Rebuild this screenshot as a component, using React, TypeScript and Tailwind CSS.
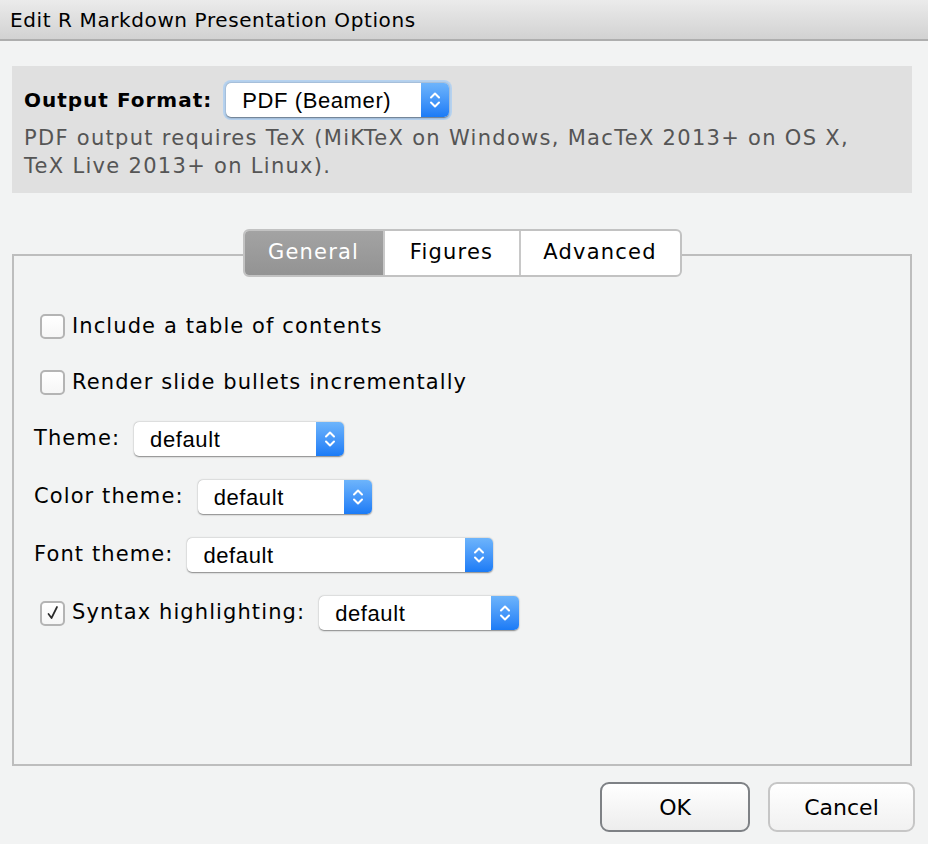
import React from 'react';

const ui = { fontFamily: '"DejaVu Sans", "Noto Sans", sans-serif' };
const helv = { fontFamily: '"Liberation Sans", Arial, sans-serif' };

const Stepper: React.FC = () => (
  <div className="flex h-full w-[28px] items-center justify-center rounded-r-[5px] bg-gradient-to-b from-[#6db4fb] to-[#1a7bf6]">
    <svg width="12" height="20" viewBox="0 0 12 20" fill="none" stroke="white" strokeWidth="2" strokeLinecap="round" strokeLinejoin="round">
      <path d="M2 7.5 L6 3.5 L10 7.5" />
      <path d="M2 12.5 L6 16.5 L10 12.5" />
    </svg>
  </div>
);

const Select: React.FC<{ value: string; width: string; focus?: boolean }> = ({ value, width, focus }) => (
  <div className={`${focus ? 'rounded-[8px] p-[3px] bg-[#b6d2ef]' : ''}`}>
    <div
      className={`flex h-[34px] ${width} items-stretch rounded-[5px] bg-white shadow-[0_0.5px_1.5px_rgba(0,0,0,0.45)]`}
    >
      <div className="flex flex-1 items-center pl-[16px] text-[22px] tracking-[0.6px] text-black" style={helv}>
        {value}
      </div>
      <Stepper />
    </div>
  </div>
);

const Checkbox: React.FC<{ checked?: boolean }> = ({ checked }) => (
  <div className="flex h-[25px] w-[25px] shrink-0 items-center justify-center rounded-[5px] border-2 border-[#b4b4b4] bg-gradient-to-b from-white to-[#f6f6f6]">
    {checked && (
      <svg width="16" height="16" viewBox="0 0 16 16" fill="none" stroke="#2a2a2a" strokeWidth="1.7" strokeLinecap="round" strokeLinejoin="round">
        <path d="M3.5 9 L6.5 13 L12 2" />
      </svg>
    )}
  </div>
);

export default function App() {
  return (
    <div className="flex h-[844px] w-[928px] flex-col bg-[#f2f3f3] text-black" style={ui}>
      {/* title bar */}
      <div className="flex h-[41px] items-center border-b-2 border-[#aeaeae] bg-gradient-to-b from-[#ebebeb] to-[#d2d2d2] pl-[10px] text-[20px] tracking-[0.6px]">
        Edit R Markdown Presentation Options
      </div>

      <div className="flex flex-1 flex-col px-[12px] pr-[16px]">
        {/* output format box */}
        <div className="mt-[25px] h-[127px] bg-[#e0e0e0] px-[12px] pt-[14px]">
          <div className="flex items-center gap-[11px]">
            <span className="text-[20px] font-bold tracking-[1px]">Output Format:</span>
            <Select value="PDF (Beamer)" width="w-[223px]" focus />
          </div>
          <div className="mt-[4px] text-[21px] leading-[28px] tracking-[1.3px] text-[#555]">
            PDF output requires TeX (MiKTeX on Windows, MacTeX 2013+ on OS X,
            <br />
            TeX Live 2013+ on Linux).
          </div>
        </div>

        {/* tabs */}
        <div className="relative mt-[36px]">
          <div className="absolute left-0 right-0 top-[25px] h-[512px] border-2 border-[#bdbdbd]" />
          <div className="relative flex justify-center">
            <div className="flex h-[48px] overflow-hidden rounded-[6px] border-2 border-[#c2c2c2] bg-white text-[21px] tracking-[1.2px]">
              <div className="flex w-[138px] items-center justify-center bg-gradient-to-b from-[#a3a3a3] to-[#939393] text-white">
                General
              </div>
              <div className="flex w-[136px] items-center justify-center border-l-2 border-[#c8c8c8]">
                Figures
              </div>
              <div className="flex w-[161px] items-center justify-center border-l-2 border-[#c8c8c8]">
                Advanced
              </div>
            </div>
          </div>

          <div className="relative flex flex-col pl-[22px] text-[21px] tracking-[1.1px]">
            <div className="mt-[34px] flex items-center gap-[7px] pl-[6px]">
              <Checkbox />
              <span>Include a table of contents</span>
            </div>
            <div className="mt-[24px] flex items-center gap-[7px] pl-[6px]">
              <Checkbox />
              <span>Render slide bullets incrementally</span>
            </div>
            <div className="mt-[24px] flex items-center gap-[14px]">
              <span>Theme:</span>
              <Select value="default" width="w-[210px]" />
            </div>
            <div className="mt-[24px] flex items-center gap-[14px]">
              <span>Color theme:</span>
              <Select value="default" width="w-[174px]" />
            </div>
            <div className="mt-[24px] flex items-center gap-[14px]">
              <span>Font theme:</span>
              <Select value="default" width="w-[306px]" />
            </div>
            <div className="mt-[24px] flex items-center pl-[6px]">
              <Checkbox checked />
              <span className="ml-[7px]">Syntax highlighting:</span>
              <div className="ml-[14px]">
                <Select value="default" width="w-[200px]" />
              </div>
            </div>
          </div>
        </div>
      </div>

      {/* buttons */}
      <div className="flex justify-end gap-[18px] pb-[12px] pr-[13px]">
        <button className="flex h-[50px] w-[150px] items-center justify-center rounded-[9px] border-2 border-[#7e8185] bg-gradient-to-b from-white to-[#ededed] text-[22px]">
          OK
        </button>
        <button className="flex h-[50px] w-[147px] items-center justify-center rounded-[9px] border-2 border-[#c6c6c6] bg-gradient-to-b from-white to-[#f1f1f1] text-[22px]">
          Cancel
        </button>
      </div>
    </div>
  );
}
